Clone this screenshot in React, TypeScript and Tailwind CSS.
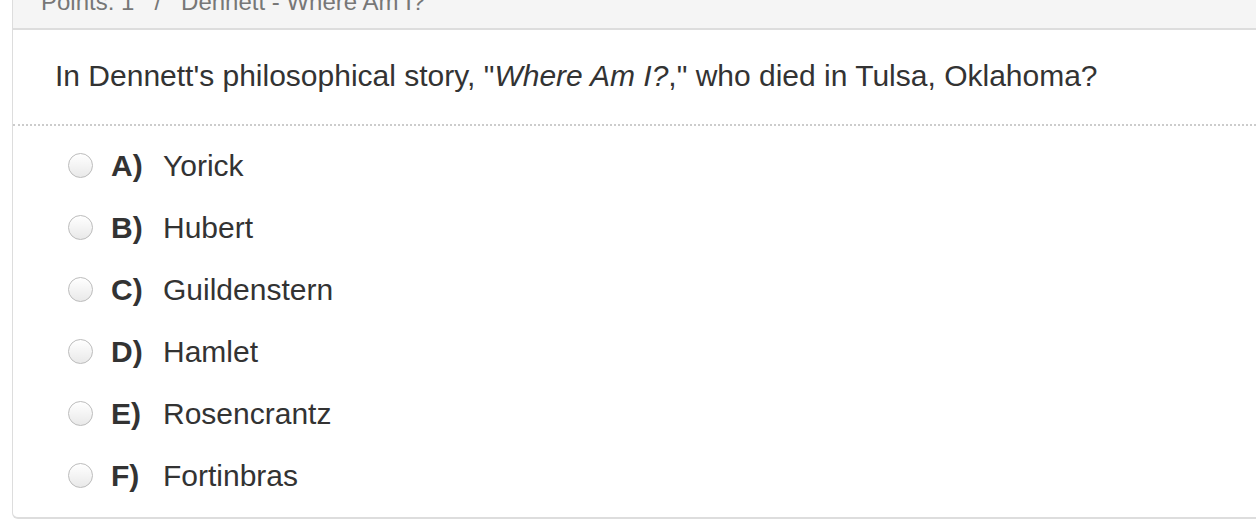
import React from "react";

const options = [
  ["A)", "Yorick"],
  ["B)", "Hubert"],
  ["C)", "Guildenstern"],
  ["D)", "Hamlet"],
  ["E)", "Rosencrantz"],
  ["F)", "Fortinbras"],
];

export default function App() {
  return (
    <div
      className="w-[1256px] h-[522px] overflow-hidden bg-white"
      style={{ fontFamily: '"Liberation Sans", Arial, sans-serif' }}
    >
      <div className="ml-[12px] mt-[-28px] border-l-[1.5px] border-b-2 border-[#dddddd] rounded-bl-[6px] bg-white">
        <div className="h-[58px] bg-[#f5f5f5] border-b-2 border-[#dddddd] pl-[28px] pt-[18px] text-[24px] leading-[24px] text-[#777777] whitespace-nowrap">
          <span>Points: 1</span>
          <span className="mx-[20px]">/</span>
          <span>Dennett - Where Am I?</span>
        </div>
        <div className="h-[96px] flex items-center pl-[42px] pb-[2px] border-b-2 border-dotted border-[#cccccc] text-[30px] leading-[34px] text-[#333333] whitespace-nowrap">
          <span>
            In Dennett's philosophical story, "<i>Where Am I?</i>," who died in Tulsa, Oklahoma?
          </span>
        </div>
        <div className="pt-[8px] pb-[11px]">
          {options.map(([l, t]) => (
            <div key={l} className="h-[62px] flex items-center pl-[55px] text-[30px] text-[#333333]">
              <span className="w-[25px] h-[25px] shrink-0 rounded-full border border-[#bcbcbc] bg-gradient-to-b from-[#ffffff] to-[#e9e9e9] shadow-[inset_0_1px_1px_rgba(255,255,255,0.9)]" />
              <span className="ml-[18px] w-[52px] font-bold">{l}</span>
              <span>{t}</span>
            </div>
          ))}
        </div>
      </div>
    </div>
  );
}
